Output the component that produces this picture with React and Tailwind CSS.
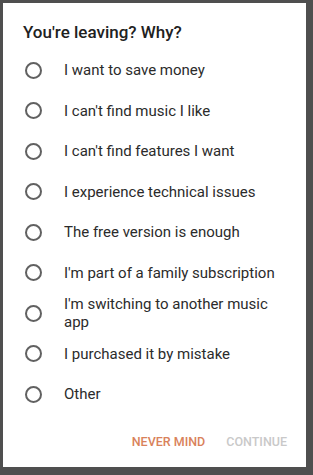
const reasons = [
  ["I want to save money"],
  ["I can't find music I like"],
  ["I can't find features I want"],
  ["I experience technical issues"],
  ["The free version is enough"],
  ["I'm part of a family subscription"],
  ["I'm switching to another music", "app"],
  ["I purchased it by mistake"],
  ["Other"],
];

const Radio = () => (
  <span className="block w-[17px] h-[17px] rounded-full border-2 border-[#616161] shrink-0" />
);

export default function App() {
  return (
    <div
      className="w-[313px] h-[475px] bg-[#4f4f4f] pt-[3px] pl-[3px]"
      style={{ fontFamily: "Roboto, 'Liberation Sans', sans-serif" }}
    >
      <div className="w-[303px] h-[464px] bg-white flex flex-col">
        <h1 className="pl-[20px] pt-[17px] text-[17px] leading-[24px] font-medium text-[#212121] mb-[6px]">
          You're leaving? Why?
        </h1>
        <div className="flex flex-col">
          {reasons.map((lines, i) => (
            <label key={i} className="h-[40.5px] flex items-center pl-[22px]">
              <Radio />
              <span className="ml-[22px] text-[15px] leading-[18px] text-[#2b2b2b]">
                {lines.map((l, j) => (
                  <span key={j} className="block">
                    {l}
                  </span>
                ))}
              </span>
            </label>
          ))}
        </div>
        <div className="mt-[10px] h-[36px] flex items-center justify-end pr-[19px] gap-[21px] text-[12.5px] font-medium">
          <button className="text-[#d9825b]">NEVER MIND</button>
          <button className="text-[#c9c9c9]">CONTINUE</button>
        </div>
      </div>
    </div>
  );
}
